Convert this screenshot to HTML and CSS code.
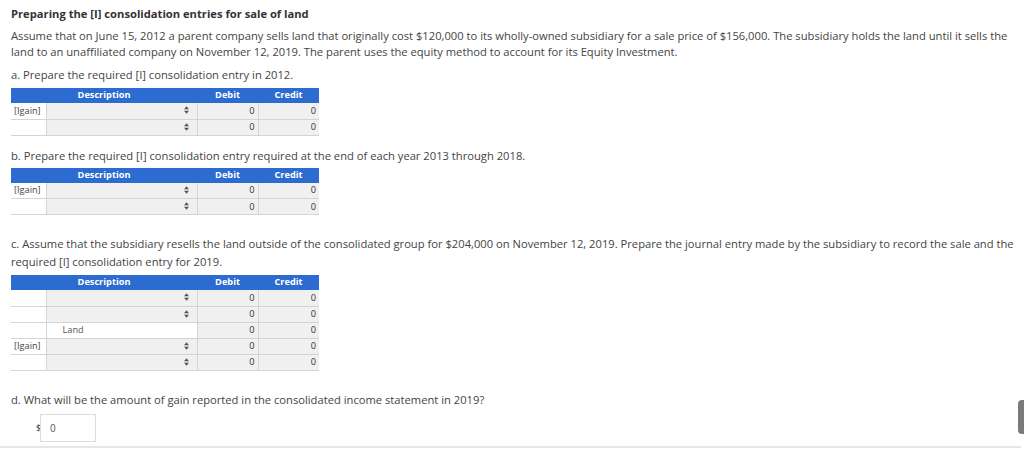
FILE: index.html
```html
<!DOCTYPE html>
<html>
<head>
<meta charset="utf-8">
<link rel="stylesheet" href="styles.css">
</head>
<body>
<div class="page">
  <h1 class="title">Preparing the [I] consolidation entries for sale of land</h1>
  <p class="intro">Assume that on June 15, 2012 a parent company sells land that originally cost $120,000 to its wholly-owned subsidiary for a sale price of $156,000. The subsidiary holds the land until it sells the land to an unaffiliated company on November 12, 2019. The parent uses the equity method to account for its Equity Investment.</p>

  <p class="q qa">a. Prepare the required [I] consolidation entry in 2012.</p>
  <table class="je">
    <colgroup><col class="c1"><col class="c2"><col class="c3"><col class="c4"></colgroup>
    <thead><tr><th colspan="2">Description</th><th>Debit</th><th>Credit</th></tr></thead>
    <tbody>
      <tr><td class="lbl">[Igain]</td><td class="sel"><svg class="arr" width="5" height="8" viewBox="0 0 5 8"><path d="M0 3.2L2.5 0.2L5 3.2Z M0 4.8L2.5 7.8L5 4.8Z" fill="#555"/></svg></td><td class="num">0</td><td class="num">0</td></tr>
      <tr><td class="lbl"></td><td class="sel"><svg class="arr" width="5" height="8" viewBox="0 0 5 8"><path d="M0 3.2L2.5 0.2L5 3.2Z M0 4.8L2.5 7.8L5 4.8Z" fill="#555"/></svg></td><td class="num">0</td><td class="num">0</td></tr>
    </tbody>
  </table>

  <p class="q qb">b. Prepare the required [I] consolidation entry required at the end of each year 2013 through 2018.</p>
  <table class="je">
    <colgroup><col class="c1"><col class="c2"><col class="c3"><col class="c4"></colgroup>
    <thead><tr><th colspan="2">Description</th><th>Debit</th><th>Credit</th></tr></thead>
    <tbody>
      <tr><td class="lbl">[Igain]</td><td class="sel"><svg class="arr" width="5" height="8" viewBox="0 0 5 8"><path d="M0 3.2L2.5 0.2L5 3.2Z M0 4.8L2.5 7.8L5 4.8Z" fill="#555"/></svg></td><td class="num">0</td><td class="num">0</td></tr>
      <tr><td class="lbl"></td><td class="sel"><svg class="arr" width="5" height="8" viewBox="0 0 5 8"><path d="M0 3.2L2.5 0.2L5 3.2Z M0 4.8L2.5 7.8L5 4.8Z" fill="#555"/></svg></td><td class="num">0</td><td class="num">0</td></tr>
    </tbody>
  </table>

  <p class="q qc">c. Assume that the subsidiary resells the land outside of the consolidated group for $204,000 on November 12, 2019. Prepare the journal entry made by the subsidiary to record the sale and the required [I] consolidation entry for 2019.</p>
  <table class="je">
    <colgroup><col class="c1"><col class="c2"><col class="c3"><col class="c4"></colgroup>
    <thead><tr><th colspan="2">Description</th><th>Debit</th><th>Credit</th></tr></thead>
    <tbody>
      <tr><td class="lbl"></td><td class="sel"><svg class="arr" width="5" height="8" viewBox="0 0 5 8"><path d="M0 3.2L2.5 0.2L5 3.2Z M0 4.8L2.5 7.8L5 4.8Z" fill="#555"/></svg></td><td class="num">0</td><td class="num">0</td></tr>
      <tr><td class="lbl"></td><td class="sel"><svg class="arr" width="5" height="8" viewBox="0 0 5 8"><path d="M0 3.2L2.5 0.2L5 3.2Z M0 4.8L2.5 7.8L5 4.8Z" fill="#555"/></svg></td><td class="num">0</td><td class="num">0</td></tr>
      <tr><td class="lbl"></td><td class="fixed">Land</td><td class="num">0</td><td class="num">0</td></tr>
      <tr><td class="lbl">[Igain]</td><td class="sel"><svg class="arr" width="5" height="8" viewBox="0 0 5 8"><path d="M0 3.2L2.5 0.2L5 3.2Z M0 4.8L2.5 7.8L5 4.8Z" fill="#555"/></svg></td><td class="num">0</td><td class="num">0</td></tr>
      <tr><td class="lbl"></td><td class="sel"><svg class="arr" width="5" height="8" viewBox="0 0 5 8"><path d="M0 3.2L2.5 0.2L5 3.2Z M0 4.8L2.5 7.8L5 4.8Z" fill="#555"/></svg></td><td class="num">0</td><td class="num">0</td></tr>
    </tbody>
  </table>

  <p class="q qd">d. What will be the amount of gain reported in the consolidated income statement in 2019?</p>
  <div class="answer"><span class="dollar">$</span><span class="box">0</span></div>
</div>
<div class="thumb"></div>
</body>
</html>
```
FILE: styles.css
```css
html, body {
  margin: 0;
  padding: 0;
  background: #fff;
}
body {
  font-family: "Open Sans", "DejaVu Sans", sans-serif;
  color: #444;
  font-size: 11.2px;
  height: 449px;
  overflow: hidden;
  position: relative;
}
.page {
  padding: 6px 0 0 11px;
  width: 1010px;
  height: 440px;
  border-bottom: 2px solid #e6e6e6;
  box-sizing: content-box;
  overflow: hidden;
}
.title {
  font-size: 11.2px;
  font-weight: 700;
  color: #333;
  margin: 0 0 6px;
  line-height: 16px;
}
.intro {
  margin: 0;
  line-height: 16px;
}
.q {
  margin: 0 0 5px;
  line-height: 16px;
}
.qa { margin-top: 7px; }
.qb { margin-top: 12px; margin-bottom: 4px; }
.qc { margin-top: 20px; line-height: 18px; margin-bottom: 4px; }
.qd { margin-top: 21px; margin-bottom: 6px; }
.je {
  border-collapse: collapse;
  table-layout: fixed;
  width: 308px;
  font-size: 9.2px;
}
.c1 { width: 35px; }
.c2 { width: 151px; }
.c3 { width: 61px; }
.c4 { width: 61px; }
.je th {
  background: #2c6bcf;
  color: #fff;
  font-weight: 700;
  height: 15px;
  padding: 0;
  line-height: 13px;
  vertical-align: top;
  border: 0;
}
.je td {
  height: 16px;
  box-sizing: border-box;
  padding: 0;
  border: 1px solid #d4d4d4;
  border-top: 0;
  background: #f0f0f0;
  line-height: 14px;
}
.je tr td:first-child { border-left: 0; }
.je tr td:last-child { border-right: 0; }
.je td.lbl {
  background: #fff;
  padding-left: 3px;
  color: #444;
  white-space: nowrap;
}
.je td.sel {
  text-align: right;
  padding-right: 8px;
}
.je td.fixed {
  background: #fff;
  padding-left: 16px;
  color: #555;
}
.arr {
  display: inline-block;
  vertical-align: middle;
  margin-bottom: 2px;
}
.je td.num {
  text-align: right;
  padding-right: 3px;
  color: #333;
}
.answer {
  display: flex;
  align-items: center;
  padding-left: 25px;
  height: 28px;
}
.dollar {
  font-size: 9px;
  color: #333;
  width: 4px;
  margin-right: 0;
}
.box {
  box-sizing: border-box;
  width: 56px;
  height: 28px;
  border: 1px solid #dcdcdc;
  padding-left: 9px;
  line-height: 26px;
  font-size: 10px;
  color: #555;
}
.thumb {
  position: absolute;
  right: 0;
  top: 400px;
  width: 6px;
  height: 34px;
  background: #7a7a7a;
  border-radius: 4px 0 0 4px;
}
```
